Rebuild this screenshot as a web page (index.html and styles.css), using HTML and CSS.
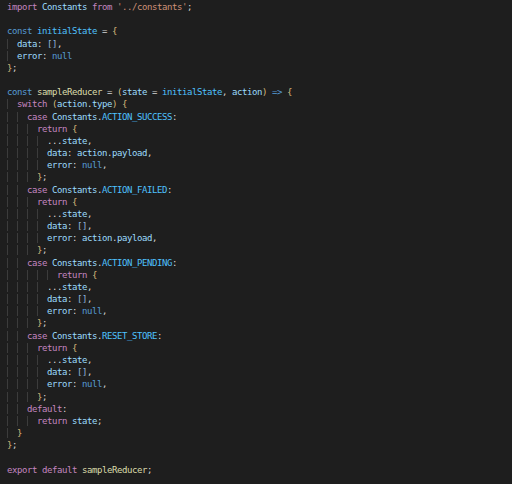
FILE: index.html
```html
<!DOCTYPE html>
<html lang="en">
<head>
  <meta charset="UTF-8">
  <title>sampleReducer.js</title>
  <link rel="stylesheet" href="styles.css">
</head>
<body>
  <div class="editor">
    <div class="ln"><span class="kw">import</span> <span class="var">Constants</span> <span class="kw">from</span> <span class="str">'../constants'</span>;</div>
    <div class="ln"> </div>
    <div class="ln"><span class="st">const</span> <span class="cst">initialState</span> = <span class="br">{</span></div>
    <div class="ln"><span class="ig">  </span><span class="var">data</span>: <span class="sq">[]</span>,</div>
    <div class="ln"><span class="ig">  </span><span class="var">error</span>: <span class="st">null</span></div>
    <div class="ln"><span class="br">}</span>;</div>
    <div class="ln"> </div>
    <div class="ln"><span class="st">const</span> <span class="fn">sampleReducer</span> = <span class="br">(</span><span class="var">state</span> = <span class="cst">initialState</span>, <span class="var">action</span><span class="br">)</span> <span class="st">=&gt;</span> <span class="br">{</span></div>
    <div class="ln"><span class="ig">  </span><span class="kw">switch</span> <span class="br">(</span><span class="var">action</span>.<span class="var">type</span><span class="br">)</span> <span class="br">{</span></div>
    <div class="ln"><span class="ig">  </span><span class="ig">  </span><span class="kw">case</span> <span class="var">Constants</span>.<span class="cst">ACTION_SUCCESS</span>:</div>
    <div class="ln"><span class="ig">  </span><span class="ig">  </span><span class="ig">  </span><span class="kw">return</span> <span class="br">{</span></div>
    <div class="ln"><span class="ig">  </span><span class="ig">  </span><span class="ig">  </span><span class="ig">  </span>...<span class="var">state</span>,</div>
    <div class="ln"><span class="ig">  </span><span class="ig">  </span><span class="ig">  </span><span class="ig">  </span><span class="var">data</span>: <span class="var">action</span>.<span class="var">payload</span>,</div>
    <div class="ln"><span class="ig">  </span><span class="ig">  </span><span class="ig">  </span><span class="ig">  </span><span class="var">error</span>: <span class="st">null</span>,</div>
    <div class="ln"><span class="ig">  </span><span class="ig">  </span><span class="ig">  </span><span class="br">}</span>;</div>
    <div class="ln"><span class="ig">  </span><span class="ig">  </span><span class="kw">case</span> <span class="var">Constants</span>.<span class="cst">ACTION_FAILED</span>:</div>
    <div class="ln"><span class="ig">  </span><span class="ig">  </span><span class="ig">  </span><span class="kw">return</span> <span class="br">{</span></div>
    <div class="ln"><span class="ig">  </span><span class="ig">  </span><span class="ig">  </span><span class="ig">  </span>...<span class="var">state</span>,</div>
    <div class="ln"><span class="ig">  </span><span class="ig">  </span><span class="ig">  </span><span class="ig">  </span><span class="var">data</span>: <span class="sq">[]</span>,</div>
    <div class="ln"><span class="ig">  </span><span class="ig">  </span><span class="ig">  </span><span class="ig">  </span><span class="var">error</span>: <span class="var">action</span>.<span class="var">payload</span>,</div>
    <div class="ln"><span class="ig">  </span><span class="ig">  </span><span class="ig">  </span><span class="br">}</span>;</div>
    <div class="ln"><span class="ig">  </span><span class="ig">  </span><span class="kw">case</span> <span class="var">Constants</span>.<span class="cst">ACTION_PENDING</span>:</div>
    <div class="ln"><span class="ig">  </span><span class="ig">  </span><span class="ig">  </span><span class="ig">  </span><span class="ig">  </span><span class="kw">return</span> <span class="br">{</span></div>
    <div class="ln"><span class="ig">  </span><span class="ig">  </span><span class="ig">  </span><span class="ig">  </span>...<span class="var">state</span>,</div>
    <div class="ln"><span class="ig">  </span><span class="ig">  </span><span class="ig">  </span><span class="ig">  </span><span class="var">data</span>: <span class="sq">[]</span>,</div>
    <div class="ln"><span class="ig">  </span><span class="ig">  </span><span class="ig">  </span><span class="ig">  </span><span class="var">error</span>: <span class="st">null</span>,</div>
    <div class="ln"><span class="ig">  </span><span class="ig">  </span><span class="ig">  </span><span class="br">}</span>;</div>
    <div class="ln"><span class="ig">  </span><span class="ig">  </span><span class="kw">case</span> <span class="var">Constants</span>.<span class="cst">RESET_STORE</span>:</div>
    <div class="ln"><span class="ig">  </span><span class="ig">  </span><span class="ig">  </span><span class="kw">return</span> <span class="br">{</span></div>
    <div class="ln"><span class="ig">  </span><span class="ig">  </span><span class="ig">  </span><span class="ig">  </span>...<span class="var">state</span>,</div>
    <div class="ln"><span class="ig">  </span><span class="ig">  </span><span class="ig">  </span><span class="ig">  </span><span class="var">data</span>: <span class="sq">[]</span>,</div>
    <div class="ln"><span class="ig">  </span><span class="ig">  </span><span class="ig">  </span><span class="ig">  </span><span class="var">error</span>: <span class="st">null</span>,</div>
    <div class="ln"><span class="ig">  </span><span class="ig">  </span><span class="ig">  </span><span class="br">}</span>;</div>
    <div class="ln"><span class="ig">  </span><span class="ig">  </span><span class="kw">default</span>:</div>
    <div class="ln"><span class="ig">  </span><span class="ig">  </span><span class="ig">  </span><span class="kw">return</span> <span class="var">state</span>;</div>
    <div class="ln"><span class="ig">  </span><span class="br">}</span></div>
    <div class="ln"><span class="br">}</span>;</div>
    <div class="ln"> </div>
    <div class="ln"><span class="kw">export</span> <span class="kw">default</span> <span class="fn">sampleReducer</span>;</div>
  </div>
</body>
</html>
```

FILE: styles.css
```css
body {
  margin: 0;
  background: #1e1e1e;
}
.editor {
  font-family: "DejaVu Sans Mono", "Liberation Mono", monospace;
  font-size: 9px;
  letter-spacing: -0.42px;
  line-height: 12.18px;
  padding: 1px 0 0 7px;
  color: #d4d4d4;
}
.ln {
  height: 12.18px;
  white-space: pre;
}
.ig {
  box-shadow: inset 1px 0 #3c3c3c;
}
.kw {
  color: #c586c0;
}
.st {
  color: #569cd6;
}
.var {
  color: #9cdcfe;
}
.cst {
  color: #4fc1ff;
}
.fn {
  color: #dcdcaa;
}
.str {
  color: #ce9178;
}
.br {
  color: #d7ba7d;
}
.sq {
  color: #8fb8dc;
}
```
